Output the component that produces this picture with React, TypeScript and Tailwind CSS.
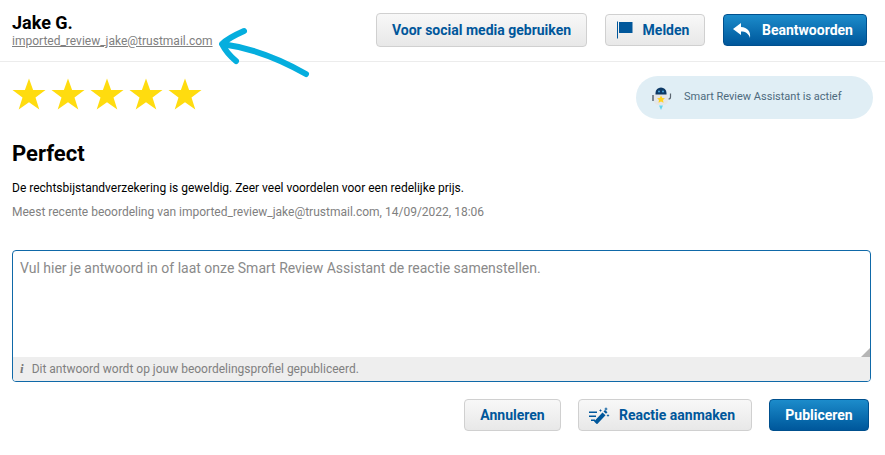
import React from "react";

const Btn = ({ children, className = "" }: { children: React.ReactNode; className?: string }) => (
  <button className={`flex h-[32px] items-center justify-center rounded-[4px] border border-[#d0d0d0] bg-gradient-to-b from-[#f8f8f8] to-[#e8e8e8] text-[14px] font-bold text-[#00579b] ${className}`}>
    {children}
  </button>
);

const PrimaryBtn = ({ children, className = "" }: { children: React.ReactNode; className?: string }) => (
  <button className={`flex h-[32px] items-center justify-center rounded-[4px] border border-[#00508e] bg-gradient-to-b from-[#1c8ccb] to-[#00579b] text-[14px] font-bold text-white ${className}`}>
    {children}
  </button>
);

const Star = () => (
  <svg width="34" height="32" viewBox="0 0 34 32" className="block shrink-0">
    <path d="M17 0.5l4.100 11.600h12.400l-10 7.400 3.800 12-10.300-7.300-10.300 7.300 3.800-12-10-7.400h12.400z" fill="#ffdc0f" />
  </svg>
);

const Robot = () => (
  <svg width="21" height="24" viewBox="0 0 21 24" className="shrink-0">
    <path d="M1 9v6" stroke="#5b6670" strokeWidth="1.500" fill="none" />
    <path d="M18.500 7.500v3.500c0 1.500-1 2-2 2" stroke="#5b6670" strokeWidth="1.200" fill="none" />
    <rect x="2" y="6" width="14" height="13" rx="4.500" fill="#e4e6e8" />
    <path d="M3.500 7a5.500 5.500 0 0 1 11 0v1.500h-11z" fill="#0d3a66" />
    <circle cx="7" cy="5.500" r="1" fill="#4aa8e0" />
    <circle cx="11" cy="5.500" r="1" fill="#4aa8e0" />
    <path d="M9 9.500l1.300 2.500 2.600.3-1.900 1.800.5 2.600-2.500-1.300-2.500 1.300.5-2.600-1.900-1.800 2.600-.3z" fill="#ffd21f" />
    <path d="M7 19.500h4l-2 4.500z" fill="#63d5ee" />
  </svg>
);

export default function App() {
  return (
    <div className="relative h-[455px] w-[885px] overflow-hidden bg-white font-['Roboto',sans-serif]">
      <header className="flex h-[62px] items-start justify-between border-b border-[#ececec] pl-[12px] pr-[18px]">
        <div className="pt-[12px]">
          <div className="text-[18px] font-bold leading-[22px] text-black">Jake G.</div>
          <div className="text-[12px] leading-[15px] text-[#808080] underline">imported_review_jake@trustmail.com</div>
        </div>
        <div className="flex items-center pt-[13px]">
          <Btn className="h-[34px] w-[211px]">Voor social media gebruiken</Btn>
          <Btn className="ml-[18px] w-[100px] gap-[10px] pr-[4px]">
            <svg width="16" height="18" viewBox="0 0 16 18">
              <path d="M0.500 0.500v17" stroke="#00579b" strokeWidth="1" />
              <path d="M2 1h13.500v11H2z" fill="#00579b" />
            </svg>
            Melden
          </Btn>
          <PrimaryBtn className="ml-[18px] w-[144px] gap-[11px] pr-[4px]">
            <svg width="18" height="15" viewBox="0 0 18 15">
              <path d="M8 0L0 6l8 6V8.500c4.500 0 7.500 1.800 9 6.500 1-6.500-2.500-10.500-9-11z" fill="#fff" />
            </svg>
            Beantwoorden
          </PrimaryBtn>
        </div>
      </header>

      <div className="flex items-start justify-between px-[12px]">
        <div className="flex gap-[5px] pt-[16px]">
          <Star /><Star /><Star /><Star /><Star />
        </div>
        <div className="mt-[14px] flex h-[43px] w-[237px] items-center gap-[11px] rounded-full bg-[#e0eef5] pl-[16px] text-[11px] text-[#4d6a7d]">
          <Robot />
          Smart Review Assistant is actief
        </div>
      </div>

      <main className="px-[12px]">
        <h1 className="mt-[21px] text-[22px] font-bold leading-[28px] text-black">Perfect</h1>
        <p className="mt-[12px] text-[12px] leading-[16px] text-black">
          De rechtsbijstandverzekering is geweldig. Zeer veel voordelen voor een redelijke prijs.
        </p>
        <p className="mt-[8px] text-[12px] leading-[16px] text-[#808080]">
          Meest recente beoordeling van imported_review_jake@trustmail.com, 14/09/2022, 18:06
        </p>

        <div className="relative mt-[30px] flex h-[132px] w-[859px] flex-col overflow-hidden rounded-[4px] border border-[#0f69a8]">
          <div className="flex-1 px-[7px] py-[7px] text-[14px] leading-[20px] text-[#8a8a8a]">
            Vul hier je antwoord in of laat onze Smart Review Assistant de reactie samenstellen.
          </div>
          <div className="flex h-[24px] items-center gap-[8px] bg-[#eeeeee] pl-[7px] text-[12px] text-[#808080]">
            <span className="font-['Liberation_Serif',serif] text-[13px] font-bold italic text-[#777777]">i</span>
            Dit antwoord wordt op jouw beoordelingsprofiel gepubliceerd.
          </div>
          <svg width="9" height="9" viewBox="0 0 9 9" className="absolute bottom-[24px] right-0">
            <path d="M9 0v9H0z" fill="#b5b5b5" />
          </svg>
        </div>

        <div className="mt-[17px] flex justify-end pr-[4px]">
          <Btn className="w-[97px]">Annuleren</Btn>
          <Btn className="ml-[17px] w-[174px] gap-[9px] pr-[6px]">
            <svg width="21" height="17" viewBox="0 0 21 17" fill="#00579b">
              <path d="M0 4.500h8v1.500H0zM0 8.500h7v1.500H0zM2 12.500h4v1.500H2z" />
              <path d="M5 14.500l8.500-9 3 2.800-8.500 9z" />
              <path d="M14.500 4.500l1.500-1.500 2.500 2.300-1.500 1.500z" />
              <path d="M17 0l.6 1.400L19 2l-1.400.6L17 4l-.6-1.400L15 2l1.400-.6zM11.500 2l.5 1 1 .5-1 .5-.5 1-.5-1-1-.5 1-.5zM19 7l.5 1 1 .5-1 .5-.5 1-.5-1-1-.5 1-.5z" />
            </svg>
            Reactie aanmaken
          </Btn>
          <PrimaryBtn className="ml-[17px] w-[100px]">Publiceren</PrimaryBtn>
        </div>
      </main>

      {/* hand drawn arrow over the header */}
      <svg width="100" height="60" viewBox="0 0 100 60" className="pointer-events-none absolute left-[215px] top-[25px]">
        <path d="M29 6C20 10 12 14 7 19c3 6 8 12 14 17M7 19c30 4 56 14 84 30" fill="none" stroke="#05aede" strokeWidth="6" strokeLinecap="round" strokeLinejoin="round" />
      </svg>
    </div>
  );
}
